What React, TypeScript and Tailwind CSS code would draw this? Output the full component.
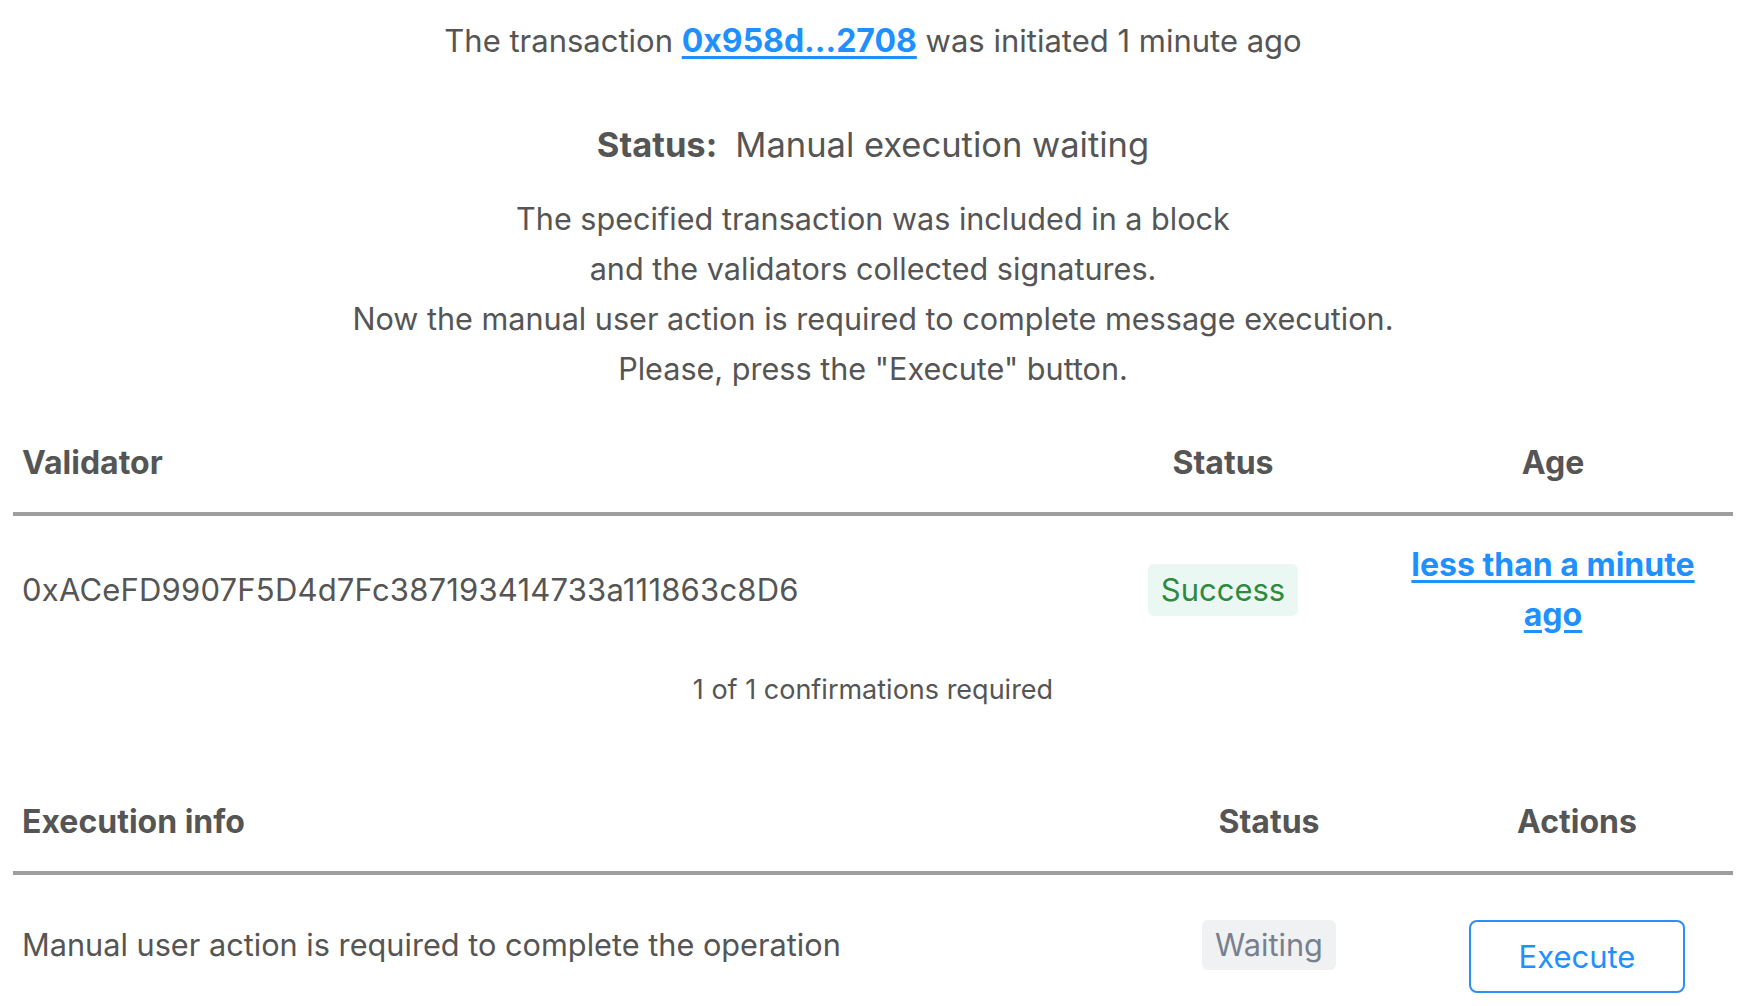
import React from 'react';

const font = { fontFamily: 'Inter, "Noto Sans", sans-serif' };

const App: React.FC = () => {
  return (
    <div className="min-h-screen bg-white pl-[13px] pr-[17px] pt-[16px] text-[#555555]" style={font}>
      <p className="text-center text-[31px] leading-[50px]">
        The transaction{' '}
        <a href="#" className="text-[32px] font-bold text-[#1e90ff] underline underline-offset-4">
          0x958d...2708
        </a>{' '}
        was initiated 1 minute ago
      </p>

      <p className="mt-[54px] text-center text-[34.5px] leading-[50px]">
        <span className="font-bold">Status:</span>
        <span className="ml-[18px]">Manual execution waiting</span>
      </p>

      <div className="mt-[24px] text-center text-[30.6px] leading-[50px]">
        <p>The specified transaction was included in a block</p>
        <p>and the validators collected signatures.</p>
        <p>Now the manual user action is required to complete message execution.</p>
        <p>Please, press the "Execute" button.</p>
      </div>

      {/* validators */}
      <div className="mt-[20px]">
        <div className="grid grid-cols-[1fr_300px_360px] border-b-[4px] border-[#9e9e9e] py-[24px] text-[32px] font-bold leading-[50px]">
          <div className="px-[9px]">Validator</div>
          <div className="text-center">Status</div>
          <div className="text-center">Age</div>
        </div>
        <div className="grid grid-cols-[1fr_300px_360px] items-center py-[24px] text-[31px] leading-[50px]">
          <div className="px-[9px] tracking-[0.2px]">0xACeFD9907F5D4d7Fc387193414733a111863c8D6</div>
          <div className="flex justify-center">
            <span className="rounded-md bg-[#ebf7f3] px-[13px] leading-[52px] text-[#2e8b3e]">Success</span>
          </div>
          <div className="px-[20px] text-center">
            <a href="#" className="text-[32px] font-bold text-[#1e90ff] underline underline-offset-4">
              less than a minute ago
            </a>
          </div>
        </div>
        <p className="mt-[6px] text-center text-[27px] leading-[40px]">1 of 1 confirmations required</p>
      </div>

      {/* execution */}
      <div className="mt-[63px]">
        <div className="grid grid-cols-[1fr_304px_312px] border-b-[4px] border-[#9e9e9e] py-[24px] text-[32px] font-bold leading-[50px]">
          <div className="px-[9px]">Execution info</div>
          <div className="text-center">Status</div>
          <div className="text-center">Actions</div>
        </div>
        <div className="grid grid-cols-[1fr_304px_312px] items-start pt-[45px] text-[30.7px] leading-[50px]">
          <div className="px-[9px]">Manual user action is required to complete the operation</div>
          <div className="flex justify-center">
            <span className="rounded-md bg-[#f0f1f3] px-[13px] leading-[50px] text-[#77808c]">Waiting</span>
          </div>
          <div className="flex justify-center">
            <button className="h-[73px] w-[216px] rounded-lg border-2 border-[#2b8ff5] text-[31px] text-[#1e90ff]">
              Execute
            </button>
          </div>
        </div>
      </div>
    </div>
  );
};

export default App;
